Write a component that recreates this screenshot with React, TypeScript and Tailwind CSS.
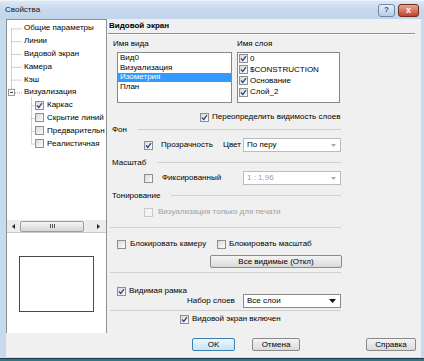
import React from 'react';

const Check = ({ checked = false, disabled = false }: { checked?: boolean; disabled?: boolean }) => (
  <span
    className={`relative inline-flex w-[9px] h-[9px] shrink-0 border ${
      disabled ? 'border-[#c9c9c9] bg-[#f4f4f4]' : 'border-[#8e8f8f] bg-gradient-to-br from-[#d9d9d9] to-[#fdfdfd]'
    }`}
  >
    {checked && (
      <svg viewBox="0 0 7 7" className="absolute left-0 top-0 w-[7px] h-[7px]">
        <path d="M1 3.5 L2.8 5.4 L6 1.1" fill="none" stroke="#2b4590" strokeWidth="1.3" />
      </svg>
    )}
  </span>
);

const Combo = ({ text, disabled = false, solid = false }: { text: string; disabled?: boolean; solid?: boolean }) => (
  <div
    className={`flex shrink-0 items-center w-[98px] h-[14px] border bg-white pl-[3px] pr-[4px] ${
      solid ? 'border-[#8a8a8a]' : 'border-[#b9bcc2]'
    }`}
  >
    <span className={`flex-1 ${disabled ? 'text-[#a0a0a0]' : 'text-black'}`}>{text}</span>
    {solid ? (
      <svg viewBox="0 0 7 4" className="w-[7px] h-[4px]">
        <path d="M0 0 H7 L3.5 4 Z" fill="#111" />
      </svg>
    ) : (
      <svg viewBox="0 0 5 3" className="w-[5px] h-[3px]">
        <path d="M0 0 H5 L2.5 3 Z" fill="#a8a8a8" />
      </svg>
    )}
  </div>
);

const Section = ({ label, className = '' }: { label: string; className?: string }) => (
  <div className={`flex items-center ml-[5px] w-[229px] h-[9px] ${className}`}>
    <span>{label}</span>
    <span className="flex-1 ml-[11px] h-px bg-[#d0d0d0]" />
  </div>
);

const Btn = ({ label, def = false, className = '' }: { label: string; def?: boolean; className?: string }) => (
  <div
    className={`flex items-center justify-center h-[13px] rounded-[2px] border ${
      def
        ? 'border-[#3c7fb1] bg-gradient-to-b from-[#ecf7fd] to-[#c6e4f5]'
        : 'border-[#8a8a8a] bg-gradient-to-b from-[#f4f4f4] to-[#dadada]'
    } ${className}`}
  >
    {label}
  </div>
);

const TREE = [
  { label: 'Общие параметры' },
  { label: 'Линии' },
  { label: 'Видовой экран' },
  { label: 'Камера' },
  { label: 'Кэш' },
  { label: 'Визуализация' },
  { label: 'Каркас', child: true, checked: true },
  { label: 'Скрытие линий', child: true },
  { label: 'Предварительн', child: true },
  { label: 'Реалистичная', child: true },
];

const VIEWS = ['Вид0', 'Визуализация', 'Изометрия', 'План'];
const LAYERS = ['0', '$CONSTRUCTION', 'Основание', 'Слой_2'];

const TreeLines = () => {
  const cy = (i: number) => 8.4 + 12.8 * i;
  return (
    <svg className="absolute left-0 top-0 w-[99px] h-[200px]" viewBox="0 0 99 200">
      <g stroke="#a3a3a3" strokeDasharray="1 1" strokeWidth="1" fill="none">
        <path d={`M4.5 ${cy(0)} V${cy(5) - 3}`} />
        {[0, 1, 2, 3, 4].map((i) => (
          <path key={i} d={`M4.5 ${cy(i) + 0.5} H15`} />
        ))}
        <path d={`M8 ${cy(5) + 0.5} H15`} />
        <path d={`M24.5 ${cy(5) + 5} V${cy(9)}`} />
        {[6, 7, 8, 9].map((i) => (
          <path key={i} d={`M24.5 ${cy(i) + 0.5} H28`} />
        ))}
      </g>
      <rect x="1.5" y={cy(5) - 3} width="6" height="6" fill="#fff" stroke="#949494" />
      <path d={`M3 ${cy(5)} H6`} stroke="#333" strokeWidth="1" />
    </svg>
  );
};

export default function App() {
  return (
    <div className="w-[424px] h-[361px] flex flex-col bg-[#c8daee] text-[8px] leading-none text-black font-['Liberation_Sans',Arial,sans-serif] overflow-hidden">
      {/* title bar */}
      <div className="h-[19px] flex items-center pl-[5px] pr-[5px] bg-gradient-to-b from-[#dce8f6] via-[#c6d8ed] to-[#c2d5eb] border-t border-[#eef4fb]">
        <span className="flex-1 text-[#1a1a1a]">Свойства</span>
        <div className="w-[17px] h-[13px] rounded-[3px] border border-[#7189a8] bg-gradient-to-b from-[#e6eef8] to-[#b8cce4] flex items-center justify-center text-[#3a4d66] font-bold">
          ?
        </div>
        <div className="ml-[3px] w-[21px] h-[13px] rounded-[3px] border border-[#6e2a1c] bg-gradient-to-b from-[#e8a591] to-[#c2432c] flex items-center justify-center text-white font-bold text-[9px]">
          x
        </div>
      </div>

      <div className="flex-1 flex pl-[6px] pr-[3px]">
        <div className="flex-1 flex flex-col bg-[#f0f0f0]">
          <div className="flex h-[314px]">
            {/* left column */}
            <div className="w-[101px] flex flex-col border-l border-t border-r border-[#8a8f98] bg-white">
              <div className="relative h-[200px] pt-[2px] overflow-hidden whitespace-nowrap">
                <TreeLines />
                {TREE.map((t) => (
                  <div
                    key={t.label}
                    className={`relative flex items-center h-[12.8px] ${t.child ? 'pl-[28px]' : 'pl-[17px]'}`}
                  >
                    {t.child && <Check checked={!!t.checked} />}
                    <span className={t.child ? 'ml-[3px]' : ''}>{t.label}</span>
                  </div>
                ))}
              </div>
              {/* horizontal scrollbar */}
              <div className="h-[12px] flex items-center bg-[#ececec]">
                <div className="w-[13px] flex justify-center">
                  <svg viewBox="0 0 3 5" className="w-[3px] h-[5px]">
                    <path d="M3 0 V5 L0 2.5 Z" fill="#222" />
                  </svg>
                </div>
                <div className="w-[64px] h-[11px] rounded-[2px] border border-[#9c9c9c] bg-gradient-to-b from-[#f6f6f6] to-[#d6d6d6] flex items-center justify-center gap-[1px]">
                  <span className="w-px h-[4px] bg-[#555]" />
                  <span className="w-px h-[4px] bg-[#555]" />
                  <span className="w-px h-[4px] bg-[#555]" />
                </div>
                <div className="flex-1 flex justify-end pr-[6px]">
                  <svg viewBox="0 0 3 5" className="w-[3px] h-[5px]">
                    <path d="M0 0 V5 L3 2.5 Z" fill="#222" />
                  </svg>
                </div>
              </div>
              {/* preview */}
              <div className="flex-1 border-t border-[#c8c8c8] pt-[23px] pl-[12px]">
                <div className="w-[75px] h-[56px] border border-[#4a4a4a]" />
              </div>
            </div>

            {/* right panel */}
            <div className="flex-1 flex flex-col">
              <div className="h-[14px] flex items-center pl-[2px] font-bold">Видовой экран</div>
              <div className="ml-[1px] w-[307px] h-[2px] border-t border-[#8f8f8f] border-b border-b-white" />

              <div className="mt-[3px] h-[11px] flex items-center">
                <span className="ml-[6px] w-[124px]">Имя вида</span>
                <span>Имя слоя</span>
              </div>

              <div className="mt-[3px] h-[51px] flex">
                <div className="ml-[10px] w-[115px] h-full border border-[#828790] bg-white">
                  {VIEWS.map((v) => (
                    <div
                      key={v}
                      className={`h-[9.8px] flex items-center pl-[2px] ${
                        v === 'Изометрия' ? 'bg-[#3399ff] text-white' : ''
                      }`}
                    >
                      {v}
                    </div>
                  ))}
                </div>
                <div className="ml-[5px] w-[103px] h-full border border-[#828790] bg-white">
                  {LAYERS.map((l) => (
                    <div key={l} className="h-[11.2px] flex items-center pl-[1px]">
                      <Check checked />
                      <span className="ml-[2px]">{l}</span>
                    </div>
                  ))}
                </div>
              </div>

              <div className="mt-[9px] h-[10px] flex items-center ml-[93px]">
                <Check checked />
                <span className="ml-[3px]">Переопределить видимость слоев</span>
              </div>

              <Section label="Фон" className="mt-[3px]" />
              <div className="mt-[4px] h-[14px] flex items-center">
                <div className="ml-[37px] w-[79px] shrink-0 flex items-center">
                  <Check checked />
                  <span className="ml-[8px]">Прозрачность</span>
                </div>
                <span className="w-[20px] shrink-0 whitespace-nowrap">Цвет</span>
                <Combo text="По перу" />
              </div>

              <Section label="Масштаб" className="mt-[6px]" />
              <div className="mt-[4px] h-[14px] flex items-center">
                <div className="ml-[37px] w-[99px] shrink-0 flex items-center">
                  <Check />
                  <span className="ml-[9px]">Фиксированный</span>
                </div>
                <Combo text="1 : 1,96" disabled />
              </div>

              <Section label="Тонирование" className="mt-[6px]" />
              <div className="mt-[7px] h-[10px] flex items-center ml-[37px] text-[#a0a0a0]">
                <Check disabled />
                <span className="ml-[5px]">Визуализация только для печати</span>
              </div>

              <div className="mt-[10px] ml-[3px] w-[231px] h-px bg-[#d0d0d0]" />

              <div className="mt-[11px] h-[10px] flex items-center">
                <div className="ml-[10px] w-[100px] shrink-0 flex items-center">
                  <Check />
                  <span className="ml-[4px]">Блокировать камеру</span>
                </div>
                <Check />
                <span className="ml-[3px]">Блокировать масштаб</span>
              </div>

              <Btn label="Все видимые (Откл)" className="mt-[6px] ml-[103px] w-[132px]" />

              <div className="mt-[4px] ml-[3px] w-[231px] h-px bg-[#d0d0d0]" />

              <div className="mt-[14px] h-[8px] flex items-center ml-[10px]">
                <Check checked />
                <span className="ml-[3px]">Видимая рамка</span>
              </div>
              <div className="mt-[-1px] h-[14px] flex items-center">
                <span className="ml-[80px] w-[56px] shrink-0">Набор слоев</span>
                <Combo text="Все слои" solid />
              </div>

              <div className="mt-[2px] ml-[3px] w-[231px] h-px bg-[#d0d0d0]" />

              <div className="mt-[3px] h-[10px] flex items-center ml-[73px]">
                <Check checked />
                <span className="ml-[3px]">Видовой экран включен</span>
              </div>
            </div>
          </div>

          {/* dialog buttons */}
          <div className="flex-1 flex items-start pt-[5px]">
            <Btn label="OK" def className="ml-[186px] w-[43px]" />
            <Btn label="Отмена" className="ml-[17px] w-[48px]" />
            <Btn label="Справка" className="ml-[66px] w-[50px]" />
          </div>
        </div>
      </div>

      <div className="h-[4px] flex flex-col">
        <div className="h-[1px] bg-[#c8daee]" />
        <div className="h-[1px] bg-[#27394a]" />
        <div className="flex-1 bg-[#247a86]" />
      </div>
    </div>
  );
}
